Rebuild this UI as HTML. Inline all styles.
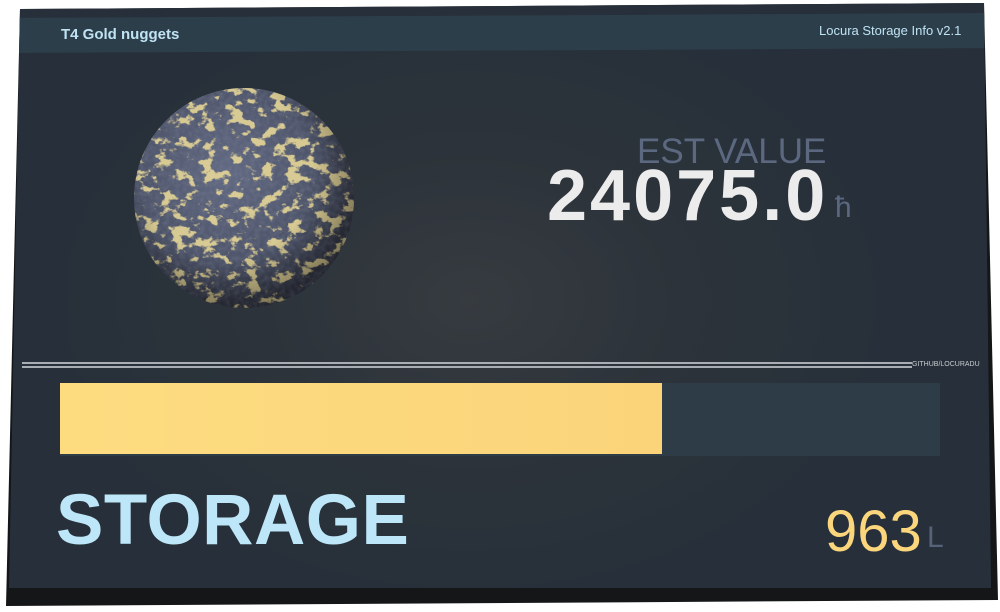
<!DOCTYPE html>
<html><head><meta charset="utf-8"><style>
html,body{margin:0;padding:0;background:#fff;width:1000px;height:612px;overflow:hidden;font-family:"Liberation Sans","DejaVu Sans",sans-serif}
#frame{position:absolute;left:0;top:0;width:1000px;height:612px;background:#141618;clip-path:polygon(20px 9px,984px 3px,998px 600px,6px 606px)}
#panel{position:absolute;left:0;top:0;width:1000px;height:612px;clip-path:polygon(20px 9px,984px 3px,991px 588px,9px 588px);
background:radial-gradient(ellipse 420px 300px at 470px 300px,#363b40 0%,#2c333a 50%,#27303a 100%)}
#hdr{position:absolute;left:0;top:0;width:1000px;height:53px;background:#2d3e4b;clip-path:polygon(0 18px,1000px 13px,1000px 48px,0 53px)}
.t{position:absolute;white-space:nowrap}
</style></head><body>
<div id="frame"></div>
<div id="panel">
<div id="hdr"></div>
<div class="t" style="left:61px;top:26px;font-size:15px;font-weight:bold;color:#bfe3f3">T4 Gold nuggets</div>
<div class="t" style="left:819px;top:23px;font-size:13px;color:#bfe3f3">Locura Storage Info v2.1</div>
<svg style="position:absolute;left:130px;top:82px" width="230" height="235">
<defs>
<filter id="n" x="0" y="0" width="100%" height="100%">
<feTurbulence type="fractalNoise" baseFrequency="0.07 0.09" numOctaves="4" seed="7"/>
<feColorMatrix type="matrix" values="0 0 0 0 0.86  0 0 0 0 0.72  0 0 0 0 0.32  11 0 0 0 -6.0"/>
</filter>
<filter id="g" x="0" y="0" width="100%" height="100%">
<feTurbulence type="fractalNoise" baseFrequency="0.2" numOctaves="2" seed="2"/>
<feColorMatrix type="matrix" values="0 0 0 0 0.2  0 0 0 0 0.22  0 0 0 0 0.3  1.2 0 0 0 -0.4"/>
</filter>
<radialGradient id="s" cx="42%" cy="38%" r="62%"><stop offset="0" stop-color="#626a84"/><stop offset="0.7" stop-color="#4c5368"/><stop offset="1" stop-color="#363a48"/></radialGradient>
<radialGradient id="sh" cx="42%" cy="38%" r="60%"><stop offset="0.65" stop-color="#000" stop-opacity="0"/><stop offset="1" stop-color="#000" stop-opacity="0.35"/></radialGradient>
<clipPath id="c"><circle cx="114" cy="116" r="110"/></clipPath>
</defs>
<circle cx="114" cy="116" r="110" fill="url(#s)"/>
<rect x="0" y="0" width="230" height="235" filter="url(#g)" clip-path="url(#c)" opacity="0.6"/>
<rect x="0" y="0" width="230" height="235" filter="url(#n)" clip-path="url(#c)" opacity="0.85"/>
<circle cx="114" cy="116" r="110" fill="url(#sh)"/>
</svg>
<div class="t" style="left:637px;top:132px;font-size:35px;color:#5b6880">EST VALUE</div>
<div class="t" style="left:547px;top:155px;font-size:72px;font-weight:bold;color:#ececec;letter-spacing:3px">24075.0</div>
<div class="t" style="left:835px;top:191px;font-size:30px;color:#5b6880">ħ</div>
<div style="position:absolute;left:22px;top:362px;width:890px;height:2px;background:#a8aeb4"></div>
<div style="position:absolute;left:22px;top:366px;width:890px;height:2px;background:#a8aeb4"></div>
<div class="t" style="left:912px;top:361px;font-size:7px;color:#c8ccd0">GITHUB/LOCURADU</div>
<div style="position:absolute;left:60px;top:383px;width:880px;height:73px;background:#2e3c48"></div>
<div style="position:absolute;left:60px;top:383px;width:602px;height:71px;background:linear-gradient(90deg,#fddc80,#fbd47a)"></div>
<div class="t" style="left:56px;top:480px;font-size:71px;font-weight:bold;color:#bde7f9;letter-spacing:0.5px">STORAGE</div>
<div class="t" style="left:825px;top:498px;font-size:58px;color:#fcd67c">963</div>
<div class="t" style="left:927px;top:521px;font-size:30px;color:#55627a">L</div>
</div>
</body></html>
